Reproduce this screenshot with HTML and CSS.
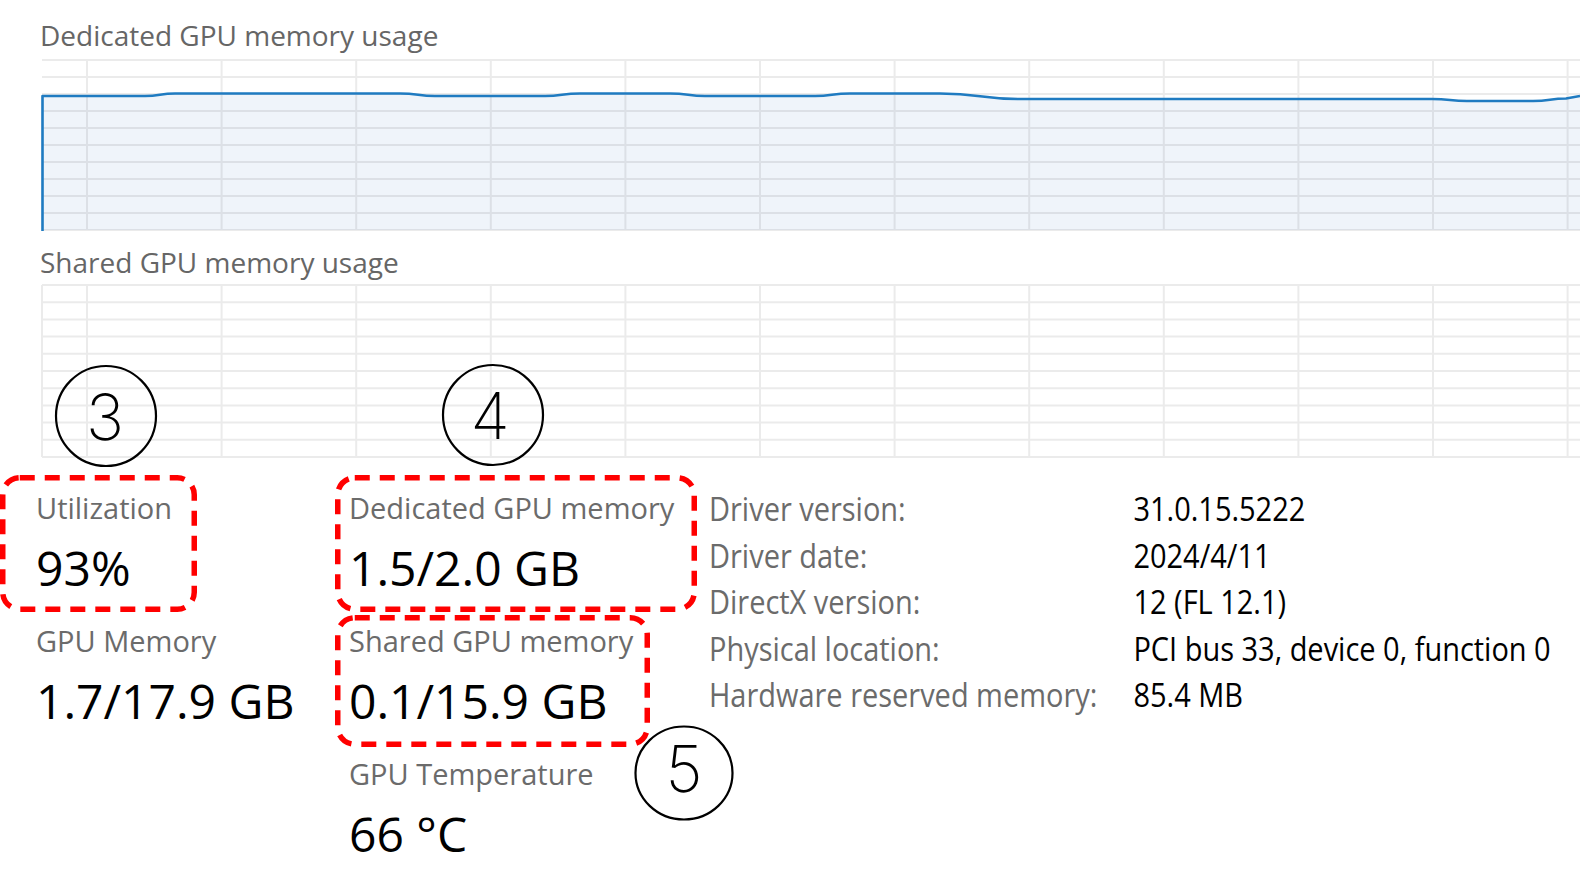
FILE: index.html
```html
<!DOCTYPE html>
<html lang="en">
<head>
<meta charset="utf-8">
<title>GPU performance</title>
<link rel="stylesheet" href="styles.css">
</head>
<body>
<div class="page">
  <section class="graph">
    <h2 class="graph-title t1">Dedicated GPU memory usage</h2>
    <svg class="chart c1" viewBox="0 58 1580 175" preserveAspectRatio="none" aria-hidden="true">
      <path class="area" d="M42,230 L42,96 L145,96 C160,96 160,93.5 175,93.5 L400,93.5 C418,93.5 418,96 435,96 L545,96 C562,96 562,93.5 580,93.5 L670,93.5 C688,93.5 688,96 705,96 L815,96 C832,96 832,93.5 850,93.5 L940,93.5 C980,93.5 980,99 1018,99 L1432,99 C1450,99 1450,101 1467,101 L1533,101 C1550,101 1550,98.5 1566,98.5 L1580,96 L1580,230 Z"/>
      <path class="grid" d="M42,60H1580M42,77H1580M42,94H1580M42,111H1580M42,128H1580M42,145H1580M42,162H1580M42,179H1580M42,196H1580M42,213H1580M42,230H1580M87,60V230M221.6,60V230M356.2,60V230M490.8,60V230M625.4,60V230M760,60V230M894.6,60V230M1029.2,60V230M1163.8,60V230M1298.4,60V230M1433,60V230M1567.6,60V230"/>
      <path class="line" d="M42.5,231 L42.5,96 L145,96 C160,96 160,93.5 175,93.5 L400,93.5 C418,93.5 418,96 435,96 L545,96 C562,96 562,93.5 580,93.5 L670,93.5 C688,93.5 688,96 705,96 L815,96 C832,96 832,93.5 850,93.5 L940,93.5 C980,93.5 980,99 1018,99 L1432,99 C1450,99 1450,101 1467,101 L1533,101 C1550,101 1550,98.5 1566,98.5 L1580,96"/>
    </svg>
  </section>
  <section class="graph">
    <h2 class="graph-title t2">Shared GPU memory usage</h2>
    <svg class="chart c2" viewBox="0 283 1580 176" preserveAspectRatio="none" aria-hidden="true">
      <path class="grid" d="M42,285H1580M42,302.2H1580M42,319.4H1580M42,336.6H1580M42,353.8H1580M42,371H1580M42,388.2H1580M42,405.4H1580M42,422.6H1580M42,439.8H1580M42,457H1580M42,285V457M87,285V457M221.6,285V457M356.2,285V457M490.8,285V457M625.4,285V457M760,285V457M894.6,285V457M1029.2,285V457M1163.8,285V457M1298.4,285V457M1433,285V457M1567.6,285V457"/>
    </svg>
  </section>

  <div class="stats">
    <div class="col col1">
      <div class="stat">
        <div class="label">Utilization</div>
        <div class="value">93%</div>
      </div>
      <div class="stat">
        <div class="label">GPU Memory</div>
        <div class="value">1.7/17.9 GB</div>
      </div>
    </div>
    <div class="col col2">
      <div class="stat">
        <div class="label">Dedicated GPU memory</div>
        <div class="value">1.5/2.0 GB</div>
      </div>
      <div class="stat">
        <div class="label">Shared GPU memory</div>
        <div class="value">0.1/15.9 GB</div>
      </div>
      <div class="stat">
        <div class="label">GPU Temperature</div>
        <div class="value">66 °C</div>
      </div>
    </div>
    <dl class="details">
      <dt>Driver version:</dt><dd>31.0.15.5222</dd>
      <dt>Driver date:</dt><dd>2024/4/11</dd>
      <dt>DirectX version:</dt><dd>12 (FL 12.1)</dd>
      <dt>Physical location:</dt><dd>PCI bus 33, device 0, function 0</dd>
      <dt>Hardware reserved memory:</dt><dd>85.4 MB</dd>
    </dl>
  </div>

  <svg class="annotations" viewBox="0 0 1580 880" aria-hidden="true">
    <rect class="dash" x="2.75" y="477.75" width="191.5" height="131.5" rx="17"/>
    <rect class="dash" x="337.75" y="477.75" width="356.5" height="131.5" rx="17"/>
    <rect class="dash" x="337.75" y="617.75" width="309.5" height="126.5" rx="17"/>
    <circle class="ring" cx="106" cy="416" r="50"/>
    <circle class="ring" cx="493" cy="415" r="50"/>
    <ellipse class="ring" cx="684" cy="773" rx="48.5" ry="46.5"/>
    <text class="num" x="105" y="439.5">3</text>
    <text class="num" x="490" y="439">4</text>
    <text class="num" x="684" y="792">5</text>
  </svg>
</div>
</body>
</html>
```

FILE: styles.css
```css
html, body {
  margin: 0;
  padding: 0;
  background: #ffffff;
}

body {
  font-family: "Open Sans", "Noto Sans", sans-serif;
}

.page {
  position: relative;
  width: 1580px;
  height: 880px;
  overflow: hidden;
}

.graph-title {
  margin: 0;
  padding-left: 40px;
  font-size: 28px;
  line-height: 28px;
  font-weight: 400;
  color: #666666;
  white-space: nowrap;
}

.t1 {
  padding-top: 21px;
}

.t2 {
  margin-top: 15px;
}

.chart {
  display: block;
  width: 1580px;
}

.c1 {
  height: 175px;
  margin-top: 9px;
}

.c2 {
  height: 176px;
  margin-top: 7px;
}

.chart .area {
  fill: #eff4fa;
}

.chart .grid {
  fill: none;
  stroke: rgba(0, 0, 0, 0.08);
  stroke-width: 2;
}

.chart .line {
  fill: none;
  stroke: #1f7bc1;
  stroke-width: 2.6;
  stroke-linejoin: round;
}

.stats {
  display: flex;
  align-items: flex-start;
  padding-left: 36px;
  margin-top: 29px;
}

.col {
  flex: none;
  display: flex;
  flex-direction: column;
  gap: 23px;
}

.col1 {
  width: 313px;
}

.col2 {
  width: 360px;
}

.label {
  font-size: 29px;
  line-height: 40px;
  color: #6b6b6b;
  white-space: nowrap;
}

.value {
  margin-top: 10px;
  font-size: 48px;
  line-height: 60px;
  color: #000000;
  white-space: nowrap;
}

.details {
  flex: none;
  margin: -2px 0 0;
  display: grid;
  grid-template-columns: 469px auto;
  font-size: 32px;
  line-height: 46.5px;
  white-space: nowrap;
  transform: scaleX(0.905);
  transform-origin: 0 0;
}

.details dt {
  color: #6b6b6b;
}

.details dd {
  margin: 0;
  color: #000000;
}

.annotations {
  position: absolute;
  left: 0;
  top: 0;
  width: 1580px;
  height: 880px;
  pointer-events: none;
}

.annotations .dash {
  fill: none;
  stroke: #ff0000;
  stroke-width: 5.5;
  stroke-dasharray: 15 10;
}

.annotations .ring {
  fill: none;
  stroke: #000000;
  stroke-width: 2.2;
}

.annotations .num {
  font-family: "Inter", "Noto Sans CJK JP", sans-serif;
  font-weight: 200;
  font-size: 64px;
  text-anchor: middle;
  fill: #000000;
}
```
